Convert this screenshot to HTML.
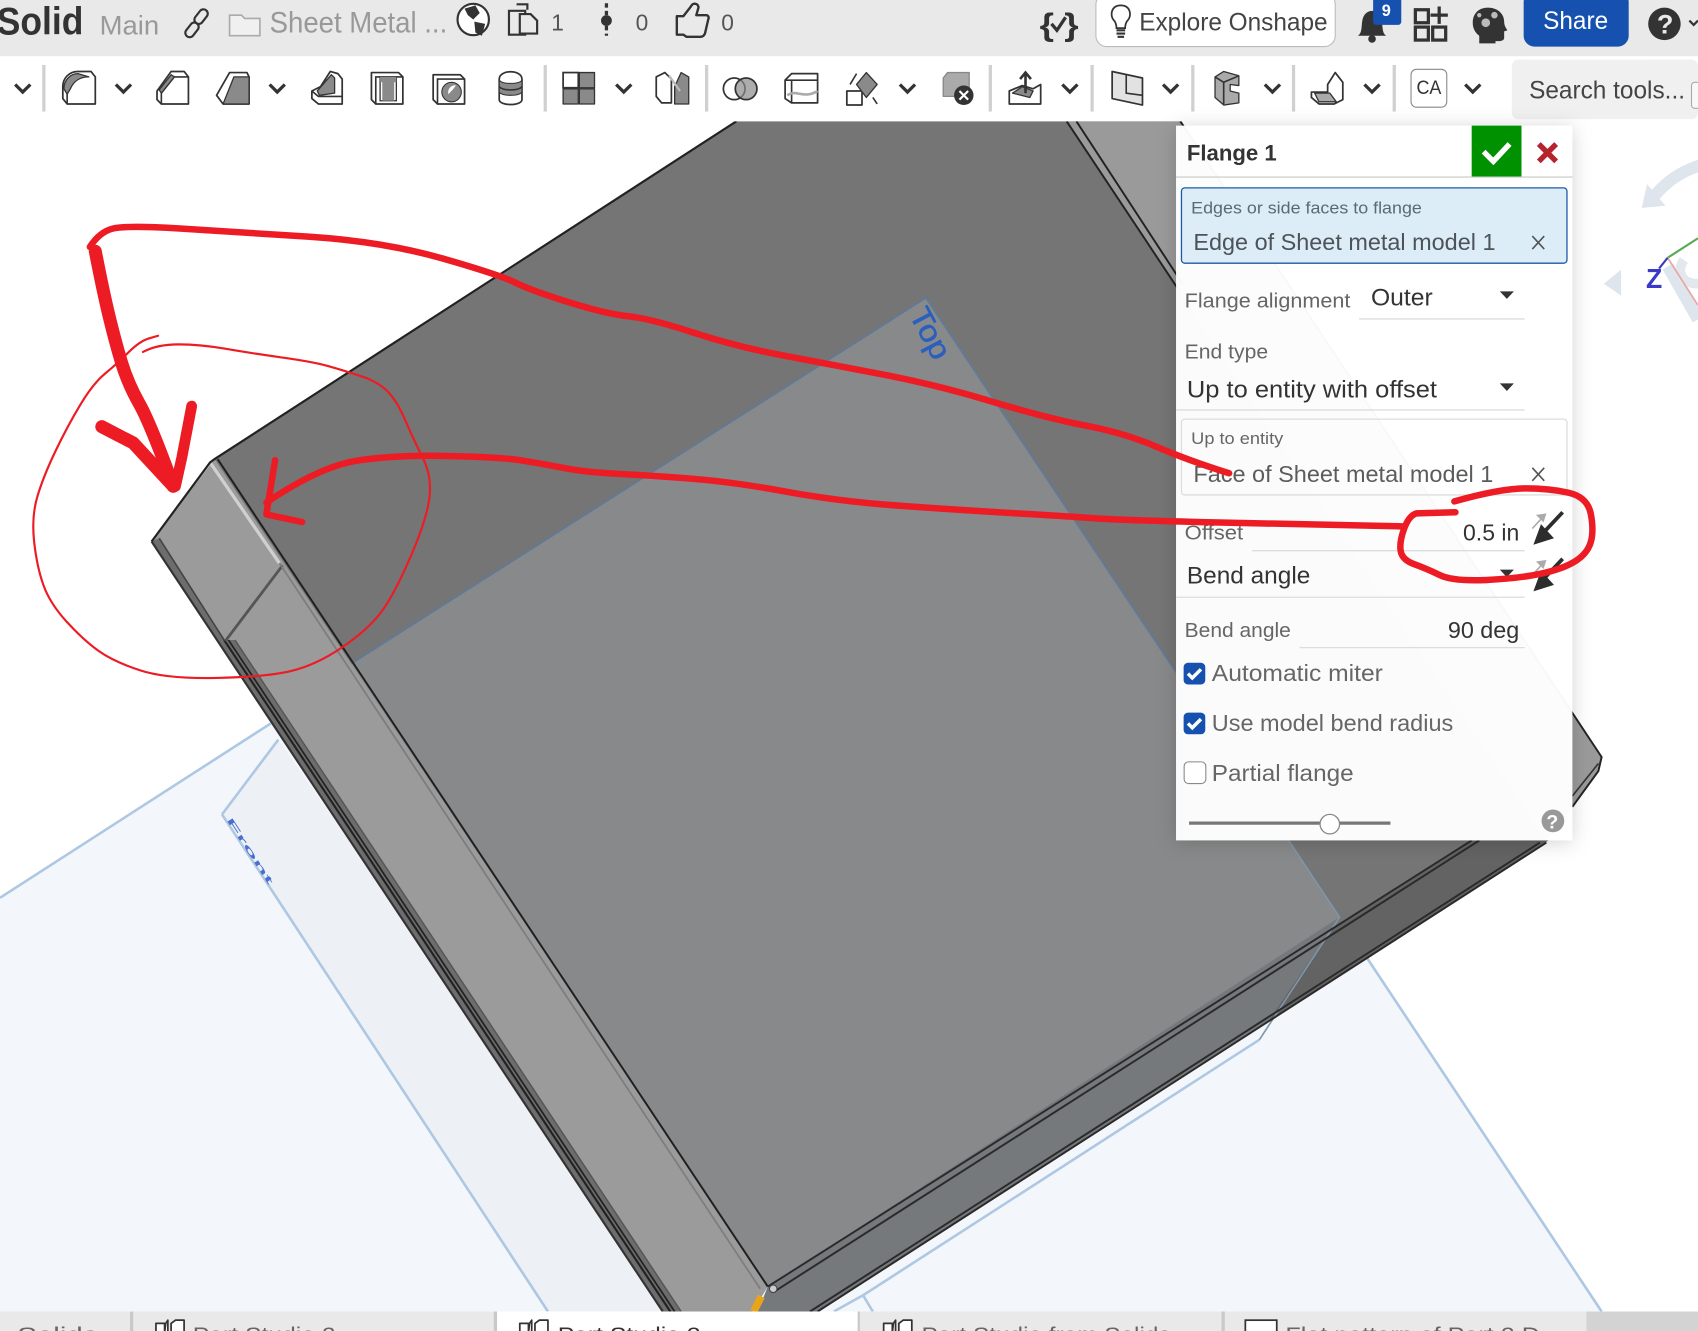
<!DOCTYPE html>
<html lang="en"><head><meta charset="utf-8"><title>Flange 1</title>
<style>
html,body{margin:0;padding:0;background:#fff;width:1698px;height:1331px;overflow:hidden}
svg{display:block}
text{font-family:"Liberation Sans",sans-serif;white-space:pre}
.i{fill:#fff;stroke:#333;stroke-width:1.6;stroke-linejoin:round}
.g{fill:#8a8a8a;stroke:#333;stroke-width:1.2;stroke-linejoin:round}
.l{fill:none;stroke:#333;stroke-width:1.5}
.c{fill:none;stroke:#333;stroke-width:3}
.lab{fill:#666;font-size:19px}
.val{fill:#333;font-size:21px}
.sel{fill:#333;font-size:22px}
.chk{fill:#666;font-size:21px}
.tab{fill:#666;font-size:20px}
.r{fill:none;stroke:#ed1c24;stroke-linecap:round;stroke-linejoin:round}
</style></head>
<body>
<svg xmlns="http://www.w3.org/2000/svg" width="1698" height="1331" viewBox="0 0 1568 1229" preserveAspectRatio="none">
<defs><filter id="sh" x="-10%" y="-10%" width="120%" height="120%"><feDropShadow dx="0" dy="2" stdDeviation="9" flood-color="#000" flood-opacity=".18"/></filter></defs>
<rect width="1568" height="1229" fill="#fff"/>

<!-- gizmo -->
<path d="M1526 183C1538 168 1552 158 1572 152" fill="none" stroke="#dfe5ec" stroke-width="11"/>
<path d="M1516 192L1521 170L1538 190Z" fill="#dfe5ec"/>
<path d="M1481 262L1497 249V273Z" fill="#dfe5ec"/>
<path d="M1540 246L1568 295" stroke="#dfe5ec" stroke-width="11" fill="none"/>
<path d="M1555 240C1548 250 1552 262 1568 262" stroke="#e3e8ee" stroke-width="9" fill="none"/>
<path d="M1540 238L1568 220" stroke="#5aaa55" stroke-width="2" fill="none"/>
<path d="M1540 238L1568 282" stroke="#e8a8a8" stroke-width="1.6" fill="none"/>
<path d="M1540 238L1532 248" stroke="#3a3ac8" stroke-width="2" fill="none"/>
<text x="1520" y="266" font-size="26" font-weight="700" fill="#3a3ac8" textLength="15" lengthAdjust="spacingAndGlyphs">Z</text>

<!-- planes -->
<polygon points="855,275 1479,1211 0,1211 0,829" fill="#f3f7fb"/>
<polygon points="205,752 257,683 625,1211 506,1211" fill="#edf1f6"/>
<path d="M0 829L250 668M205 752L257 683M205 752L506 1211M1262 884L1479 1211M1163 960L797 1196L806 1211M797 1196L770 1211" fill="none" stroke="#aec7e2" stroke-width="2.4"/>
<text transform="translate(209,757) rotate(57)" font-size="8" font-weight="700" fill="#4a6fd0" textLength="72" lengthAdjust="spacingAndGlyphs">Front</text>

<!-- model -->
<polygon points="198,424 680,112 985,112 1428,776 1359,776 709,1188 324,613" fill="#757575"/>
<polygon points="985,111 1090,111 1479,699 1476,712 1452,745 1428,776" fill="#9a9a9a"/>
<polygon points="709,1188 1359,776 1430,776 755,1211 700,1211" fill="#636363"/>
<polygon points="324,613 855,275 1237,847 709,1188" fill="#88898a"/>
<polygon points="709,1188 1237,847 1172,942 755,1211 700,1211" fill="#75797b"/>
<path d="M1190 776L855 275L324 613" fill="none" stroke="#5f7a97" stroke-width="1.6"/>
<path d="M1190 776L1237 847L1163 960" fill="none" stroke="#7f95aa" stroke-width="1.5"/>
<polygon points="198,424 140,500 612,1211 695,1211 709,1188" fill="#9b9b9b"/>
<polygon points="140,500 147,497 207,591 217,591 629,1211 612,1211" fill="#6d6d6d"/>
<path d="M140 500L612 1211" stroke="#333" stroke-width="2" fill="none"/>
<path d="M147 497L207 591" stroke="#444" stroke-width="1.5" fill="none"/>
<path d="M207 591L619 1211" stroke="#222" stroke-width="2" fill="none"/>
<path d="M211 591L623 1211" stroke="#222" stroke-width="1.6" fill="none"/>
<path d="M217 591L629 1211" stroke="#555" stroke-width="1.3" fill="none"/>
<path d="M261 522L208 592" stroke="#555" stroke-width="2.6" fill="none"/>
<path d="M194 427L258 520" stroke="#d0d0d0" stroke-width="3" fill="none"/>
<path d="M258 520L702 1190" stroke="#7d7d7d" stroke-width="1.6" fill="none"/>
<path d="M140 500L194 427L198 424L680 112" stroke="#222" stroke-width="2" fill="none"/>
<path d="M201 424L709 1188" stroke="#1f1f1f" stroke-width="1.8" fill="none"/>
<path d="M985 112L1090 270M994 112L1092 262M1090 112L1479 699L1476 712L1452 745" stroke="#222" stroke-width="1.8" fill="none"/>
<path d="M1476 705L1452 735" stroke="#333" stroke-width="1.5" fill="none"/>
<path d="M709 1188L1359 776M716 1192L1366 776" stroke="#2a2a2a" stroke-width="1.8" fill="none"/>
<path d="M748 1211L1422 778M755 1211L1428 778" stroke="#2a2a2a" stroke-width="1.8" fill="none"/>
<path d="M703 1197L696 1211" stroke="#e8a41a" stroke-width="7" fill="none"/>
<circle cx="714" cy="1190" r="3.5" fill="#ccc" stroke="#444"/>
<text transform="translate(839,290) rotate(62)" font-size="28" fill="#2b5fbd" stroke="#2b5fbd" stroke-width=".5" textLength="50" lengthAdjust="spacingAndGlyphs">Top</text>

<!-- header -->
<rect width="1568" height="52" fill="#e9e9e9"/>
<text x="-3" y="32" font-size="36" font-weight="700" fill="#333" textLength="80" lengthAdjust="spacingAndGlyphs">Solid</text>
<text x="92" y="32" font-size="25" fill="#999" textLength="55" lengthAdjust="spacingAndGlyphs">Main</text>
<g fill="none" stroke="#333" stroke-width="2"><rect x="182" y="8" width="8" height="15" rx="4" transform="rotate(38 186 15)"/><rect x="173" y="20" width="8" height="15" rx="4" transform="rotate(38 177 28)"/></g>
<path d="M212 14h11l3 3h14v16h-28z" fill="#f0f0f0" stroke="#aaa" stroke-width="1.5"/>
<text x="249" y="30" font-size="27" fill="#999" textLength="164" lengthAdjust="spacingAndGlyphs">Sheet Metal ...</text>
<circle cx="437" cy="18" r="14.5" fill="#fff" stroke="#333" stroke-width="2"/>
<path d="M429 8l10-3 4 7-6 6-5-4zM438 20l10 2-3 11-6-3z" fill="#333"/>
<path d="M470 10h15v22h-15z M477 4h10v5" fill="none" stroke="#333" stroke-width="2"/><path d="M480 13h10l6 6v12h-16z" fill="#e9e9e9" stroke="#333" stroke-width="2"/>
<text x="509" y="28" font-size="21" fill="#555">1</text>
<path d="M560 3v30" stroke="#333" stroke-width="3" stroke-dasharray="4 3" fill="none"/><circle cx="560" cy="19" r="5" fill="#333"/>
<text x="587" y="28" font-size="21" fill="#555">0</text>
<path d="M625 15h6l7-9c2-4 7-3 7 1l-2 7h9c2 0 3 2 2 4l-3 13c-1 2-2 3-4 3h-13l-3-2h-6z" fill="none" stroke="#333" stroke-width="2.2" stroke-linejoin="round"/>
<text x="666" y="28" font-size="21" fill="#555">0</text>
<text x="960" y="33" font-size="29" font-weight="700" fill="#333" textLength="36" lengthAdjust="spacingAndGlyphs">{ }</text>
<path d="M971 22l5 6 8-12" fill="none" stroke="#333" stroke-width="3"/>
<rect x="1012" y="-6" width="221" height="49" rx="10" fill="#fff" stroke="#bbb"/>
<path d="M1028 18c-3-4-2-13 7-13s10 9 7 13c-2 2-3 4-3 8h-8c0-4-1-6-3-8z" fill="#fff" stroke="#333" stroke-width="1.6"/><path d="M1031 28h8M1031 31h8M1032 34h6" stroke="#333" stroke-width="2"/>
<text x="1052" y="28" font-size="23" fill="#444" textLength="174" lengthAdjust="spacingAndGlyphs">Explore Onshape</text>
<path d="M1254 33c4-3 3-8 4-14 1-6 5-9 9-9s8 3 9 9c1 6 0 11 4 14z" fill="#333"/><circle cx="1267" cy="36" r="3.5" fill="#333"/>
<rect x="1268" y="-5" width="26" height="28" rx="3" fill="#1651b0"/>
<text x="1276" y="15" font-size="15" font-weight="700" fill="#fff">9</text>
<g fill="none" stroke="#333" stroke-width="3"><rect x="1307" y="9" width="12" height="12"/><rect x="1307" y="25" width="12" height="12"/><rect x="1323" y="25" width="12" height="12"/><path d="M1329 6v16M1321 14h16"/></g>
<path d="M1366 40v-7c-4-3-6-7-6-12 0-9 6-14 14-14s15 5 15 13c0 3 1 5 3 8l-3 1v6c0 2-2 3-5 3h-3v2z" fill="#333"/>
<circle cx="1372" cy="21" r="4" fill="#bbb"/><circle cx="1380" cy="14" r="3" fill="#bbb"/><circle cx="1366" cy="14" r="2" fill="#bbb"/>
<rect x="1407" y="-8" width="97" height="51" rx="10" fill="#1651b0"/>
<text x="1425" y="27" font-size="23" fill="#fff" textLength="60" lengthAdjust="spacingAndGlyphs">Share</text>
<circle cx="1537" cy="22" r="15" fill="#333"/><text x="1530" y="31" font-size="25" font-weight="700" fill="#e9e9e9">?</text>
<path class="c" style="stroke-width:2" d="M1560 19l4 4 4-4"/>

<!-- toolbar -->
<rect y="52" width="1568" height="60" fill="#fff"/>
<g fill="#d0d0d0"><rect x="39" y="60" width="3" height="43"/><rect x="502" y="60" width="3" height="43"/><rect x="651" y="60" width="3" height="43"/><rect x="913" y="60" width="3" height="43"/><rect x="1007" y="60" width="3" height="43"/><rect x="1100" y="60" width="3" height="43"/><rect x="1193" y="60" width="3" height="43"/><rect x="1286" y="60" width="3" height="43"/></g>
<g class="c"><path class="c" d="M14 78l7 7 7-7"/><path class="c" d="M107 78l7 7 7-7"/><path class="c" d="M249 78l7 7 7-7"/><path class="c" d="M569 78l7 7 7-7"/><path class="c" d="M831 78l7 7 7-7"/><path class="c" d="M981 78l7 7 7-7"/><path class="c" d="M1074 78l7 7 7-7"/><path class="c" d="M1168 78l7 7 7-7"/><path class="c" d="M1260 78l7 7 7-7"/><path class="c" d="M1353 78l7 7 7-7"/></g>
<!-- fillet -->
<path class="i" d="M58 91V80c0-8 6-14 14-14h12l4 5v25H62z"/><path class="l" d="M62 96V80"/><path class="g" d="M59 82c0-8 6-14 13-14l10 3c-8 0-14 4-17 11l-3 5z"/>
<!-- chamfer -->
<path class="i" d="M145 84l13-18h12l4 5v25h-25l-4-4z"/><path class="l" d="M149 96V86l12-15h13"/><path class="g" d="M147 83l11-14 3 2-12 15z"/>
<!-- draft -->
<path class="i" d="M200 88l12-21h16l2 4v25h-24z"/><path class="g" d="M206 96l10-25h14v25z"/>
<!-- rib -->
<path class="i" d="M288 84l8-4 9-14 7 2 4 5v23h-22l-6-5z"/><path class="g" d="M293 84l13-15 3 3v14l-14 2z"/><path class="l" d="M288 84l6 5h22"/>
<!-- shell -->
<path class="i" d="M343 67h25l4 4v25h-25l-4-4z"/><path class="l" d="M347 96V71h25"/><path d="M351 71h15v22h-15z" fill="#fff" stroke="#333" stroke-width="1.2"/><path d="M351 71h15v5h-2v11h-11v-11h-2zM353 87h11v6h-11z" fill="#8a8a8a"/>
<!-- hole -->
<path class="i" d="M400 69h25l4 4v23h-25l-4-4z"/><path class="l" d="M404 96V73h25"/><circle cx="417" cy="85" r="9" fill="#8a8a8a" stroke="#333"/><path d="M414 87c-1-5 3-9 7-8-2 3-4 5-7 8z" fill="#fff"/>
<!-- thread -->
<path class="i" d="M461 73c0-9 21-9 21 0v19c0 6-21 6-21 0z"/><path d="M461 74c3 4 18 4 21 0v11c-3 4-18 4-21 0z" fill="#8a8a8a" stroke="#333"/><path d="M461 80c3 4 18 4 21 0" class="l"/>
<!-- pattern -->
<rect x="520" y="67" width="14" height="14" fill="#fff" stroke="#333" stroke-width="1.6"/><rect x="535" y="67" width="14" height="14" class="g"/><rect x="520" y="82" width="14" height="14" class="g"/><rect x="535" y="82" width="14" height="14" class="g"/>
<!-- split -->
<path class="i" d="M606 71l8-4 6 6v22h-9l-5-6z"/><path class="g" d="M623 96V80l6-13 7 4v25z"/><path d="M618 70l10 14" stroke="#bbb" stroke-width="2" fill="none"/>
<!-- boolean -->
<circle cx="678" cy="82" r="10" fill="#fff" stroke="#333" stroke-width="1.6"/><circle cx="689" cy="82" r="10" fill="#8a8a8a" fill-opacity=".7" stroke="#333" stroke-width="1.6"/>
<!-- split face -->
<path class="i" d="M725 74l6-6h24v27h-24l-6-4z"/><path class="l" d="M731 74h24M725 74h6v21"/><path d="M727 88c8-6 15 4 28-4" fill="none" stroke="#aaa" stroke-width="2.4"/>
<!-- transform -->
<path class="i" d="M782 84h14v13h-14z"/><path class="g" d="M800 67l10 11-10 12-9-12z"/><path class="l" d="M785 78l6-10M806 90l4 6"/>
<!-- delete -->
<path class="g" style="fill:#aaa;stroke:#888" d="M871 72l4-5h20v22h-24z"/><circle cx="890" cy="88" r="9" fill="#333"/><path d="M886 84l8 8M894 84l-8 8" stroke="#fff" stroke-width="2"/>
<!-- sheet metal start -->
<path class="i" d="M932 84l12-5 10 3 7-4v18h-29z"/><path class="g" d="M935 86l9-6 10 4-3 6z"/><path d="M947 86V68M942 73l5-6 5 6" fill="none" stroke="#333" stroke-width="2.4"/>
<!-- flange face -->
<path class="i" style="fill:#e2e2e2" d="M1027 66l28 6v25l-28-6z"/><path class="l" d="M1040 69v17l15 2"/>
<!-- bent -->
<path class="g" style="fill:#aaa" d="M1122 71l8-5 14 4v9l-8-1v6l8 2v9l-14 2-8-7z"/><path class="l" d="M1122 71l8 5v20M1130 76l14-6"/>
<!-- tab -->
<path class="i" d="M1211 85h15v-7l7-11 7 9v16l-8 4h-14l-7-6z"/><path class="g" style="fill:#aaa" d="M1214 86h14l6 8h-16z"/>
<rect x="1303" y="64" width="33" height="35" rx="5" fill="#fff" stroke="#888"/>
<text x="1308" y="87" font-size="18" fill="#333" textLength="23" lengthAdjust="spacingAndGlyphs">CA</text>
<rect x="1396" y="55" width="172" height="55" rx="6" fill="#f0f0f0"/>
<text x="1412" y="91" font-size="23" fill="#444" textLength="144" lengthAdjust="spacingAndGlyphs">Search tools...</text>
<rect x="1562" y="76" width="12" height="24" rx="3" fill="#f8f8f8" stroke="#aaa"/>

<!-- panel -->
<rect x="1086" y="116" width="366" height="660" fill="#fff" fill-opacity=".97" filter="url(#sh)"/>
<path d="M1086 163.5H1452" stroke="#d8d8d8" stroke-width="1.4"/>
<text x="1096" y="148" font-size="20.5" font-weight="700" fill="#333" textLength="83" lengthAdjust="spacingAndGlyphs">Flange 1</text>
<rect x="1359" y="116" width="46" height="47" fill="#009100"/>
<path d="M1370 140l9 9 15-16" fill="none" stroke="#fff" stroke-width="5"/>
<path d="M1421 133l16 16M1437 133l-16 16" stroke="#b5232f" stroke-width="5" fill="none"/>
<rect x="1091" y="173.5" width="356" height="69.5" rx="3" fill="#dcedf8" stroke="#1d5aa5" stroke-width="1.2"/>
<text x="1100" y="197" font-size="15" fill="#5a6a75" textLength="213" lengthAdjust="spacingAndGlyphs">Edges or side faces to flange</text>
<text x="1102" y="231" font-size="21" fill="#4d5358" textLength="279" lengthAdjust="spacingAndGlyphs">Edge of Sheet metal model 1</text>
<path d="M1415 218l11 12M1426 218l-11 12" stroke="#555" stroke-width="1.5" fill="none"/>
<text class="lab" x="1094" y="284" textLength="153" lengthAdjust="spacingAndGlyphs">Flange alignment</text>
<text class="sel" x="1266" y="282" textLength="57" lengthAdjust="spacingAndGlyphs">Outer</text>
<path d="M1385 269h13l-6.500 7z" fill="#333"/>
<path d="M1255 294.500H1408M1086 378.500H1408M1156 508.500H1408M1086 551.500H1408M1200 598H1408" stroke="#ddd" stroke-width="1.200" fill="none"/>
<text class="lab" x="1094" y="331" textLength="77" lengthAdjust="spacingAndGlyphs">End type</text>
<text class="sel" x="1096" y="367" textLength="231" lengthAdjust="spacingAndGlyphs">Up to entity with offset</text>
<path d="M1385 354h13l-6.500 7z" fill="#333"/>
<rect x="1091" y="387" width="356" height="70" rx="3" fill="none" stroke="#ddd" stroke-width="1.200"/>
<text x="1100" y="410" font-size="15" fill="#666" textLength="85" lengthAdjust="spacingAndGlyphs">Up to entity</text>
<text x="1102" y="445" font-size="21" fill="#5c5c5c" textLength="277" lengthAdjust="spacingAndGlyphs">Face of Sheet metal model 1</text>
<path d="M1415 432l11 12M1426 432l-11 12" stroke="#555" stroke-width="1.500" fill="none"/>
<text class="lab" x="1094" y="498" textLength="54" lengthAdjust="spacingAndGlyphs">Offset</text>
<text class="val" x="1351" y="499" textLength="52" lengthAdjust="spacingAndGlyphs">0.5 in</text>
<path d="M1415 488l12-13M1427 475l-7 1 5 5z" stroke="#aaa" stroke-width="1.500" fill="#aaa"/>
<path d="M1443 473l-16 17" stroke="#2d2d2d" stroke-width="3.500" fill="none"/><path d="M1416 503l7-19 12 13z" fill="#2d2d2d"/>
<text class="sel" x="1096" y="539" textLength="114" lengthAdjust="spacingAndGlyphs">Bend angle</text>
<path d="M1385 526h13l-6.500 7z" fill="#333"/>
<path d="M1415 531l12-13M1427 518l-7 1 5 5z" stroke="#aaa" stroke-width="1.500" fill="#aaa"/>
<path d="M1443 516l-16 17" stroke="#2d2d2d" stroke-width="3.500" fill="none"/><path d="M1416 546l7-19 12 13z" fill="#2d2d2d"/>
<text class="lab" x="1094" y="588" textLength="98" lengthAdjust="spacingAndGlyphs">Bend angle</text>
<text class="val" x="1337" y="589" textLength="66" lengthAdjust="spacingAndGlyphs">90 deg</text>
<rect x="1093" y="612" width="20" height="20" rx="4" fill="#1651b0"/><path d="M1097 622l4 4 8-8" fill="none" stroke="#fff" stroke-width="3.200"/>
<text class="chk" x="1119" y="629" textLength="158" lengthAdjust="spacingAndGlyphs">Automatic miter</text>
<rect x="1093" y="658" width="20" height="20" rx="4" fill="#1651b0"/><path d="M1097 668l4 4 8-8" fill="none" stroke="#fff" stroke-width="3.200"/>
<text class="chk" x="1119" y="675" textLength="223" lengthAdjust="spacingAndGlyphs">Use model bend radius</text>
<rect x="1093.500" y="703.500" width="20" height="20" rx="4" fill="#fff" stroke="#888"/>
<text class="chk" x="1119" y="721" textLength="131" lengthAdjust="spacingAndGlyphs">Partial flange</text>
<path d="M1098 760H1284" stroke="#777" stroke-width="3"/>
<circle cx="1228" cy="761" r="9" fill="#fff" stroke="#888" stroke-width="1.200"/>
<circle cx="1434" cy="758" r="10.500" fill="#999"/><text x="1428" y="765" font-size="18" font-weight="700" fill="#fff">?</text>

<!-- tabs -->
<rect y="1211" width="1568" height="18" fill="#d3d3d3"/>
<rect y="1211" width="1465" height="18" fill="#e9e9e9"/>
<rect x="458" y="1211" width="334" height="18" fill="#fff"/>
<rect x="120" y="1211" width="3" height="18" fill="#c9c9c9"/><rect x="456" y="1211" width="3" height="18" fill="#c9c9c9"/><rect x="792" y="1211" width="2" height="18" fill="#c9c9c9"/><rect x="1128" y="1211" width="3" height="18" fill="#c9c9c9"/>
<text class="tab" x="16" y="1239" textLength="74" lengthAdjust="spacingAndGlyphs">Solids</text>
<path class="i" d="M144 1222h8v12h-8zM153 1222l2-3v12h-3zM158 1222l4-3 8 0v14h-12z" />
<text class="tab" x="178" y="1239" textLength="132" lengthAdjust="spacingAndGlyphs">Part Studio 2</text>
<path class="i" d="M480 1222h8v12h-8zM489 1222l2-3v12h-3zM494 1222l4-3 8 0v14h-12z"/>
<text class="tab" x="515" y="1239" style="fill:#333" textLength="132" lengthAdjust="spacingAndGlyphs">Part Studio 3</text>
<path class="i" d="M816 1222h8v12h-8zM825 1222l2-3v12h-3zM830 1222l4-3 8 0v14h-12z"/>
<text class="tab" x="851" y="1239" textLength="230" lengthAdjust="spacingAndGlyphs">Part Studio from Solids</text>
<rect x="1150" y="1219" width="29" height="20" fill="#fff" stroke="#333" stroke-width="1.600"/>
<text class="tab" x="1187" y="1239" textLength="235" lengthAdjust="spacingAndGlyphs">Flat pattern of Part 2 D</text>

<!-- red annotation -->
<path class="r" stroke-width="2" d="M146 310L137.500 312.500Q129 315 118.500 325.500Q108 336 97 345Q86 354 74 374Q62 394 51 417Q40 440 34.500 458.500Q29 477 31.500 500Q34 523 40 540Q46 557 61.500 574Q77 591 91 601Q105 611 129.500 619Q154 627 200 626Q246 625 269 619.500Q292 614 315.500 598Q339 582 351 566.500Q363 551 378.500 515.500Q394 480 396.500 460Q399 440 390.500 423Q382 406 374 387.500Q366 369 357 360.500Q348 352 332.500 347Q317 342 303 338Q289 334 260 330Q231 326 208 322Q185 318 165 318Q145 318 132 325"/>
<path class="r" stroke-width="6" d="M83 228Q92 214 104.500 211Q117 208 166 211Q215 214 284.500 218.500Q354 223 408 238.500Q462 254 476 261Q490 268 525 279Q560 290 580 292Q600 294 640 307Q680 320 719.500 327.500Q759 335 811.500 345Q864 355 915 370.500Q966 386 1002.500 393Q1039 400 1068 412.500Q1097 425 1135 437"/>
<path class="r" stroke-width="12" d="M88 232Q95 268 100.500 291Q106 314 112 334Q118 354 128.500 372.500Q139 391 160 449"/>
<polyline class="r" stroke-width="12" points="94,394 123,409 160,449"/>
<polyline class="r" stroke-width="10" points="177,375 168,422 162,449"/>
<path class="r" stroke-width="6" d="M1295 486Q1180 484 1105 482Q1030 480 1010.500 478.500Q991 477 939 474Q887 471 831 467Q775 463 726 454Q677 445 638.500 442Q600 439 570 437.500Q540 436 520 432Q500 428 481 425Q462 422 412.500 421Q363 420 329 425.500Q295 431 246 464"/>
<polyline class="r" stroke-width="6" points="254,425 246,475 279,482"/>
<path class="r" stroke-width="6" d="M1343 463Q1386 451 1408.500 451Q1431 451 1448.500 455Q1466 459 1469 474.500Q1472 490 1469 500.500Q1466 511 1455 518Q1444 525 1424 529.500Q1404 534 1373 535.500Q1342 537 1329.500 531Q1317 525 1306 521Q1295 517 1293.500 509Q1292 501 1296.500 488.500Q1301 476 1308 474L1344 473"/>
</svg>
</body></html>
